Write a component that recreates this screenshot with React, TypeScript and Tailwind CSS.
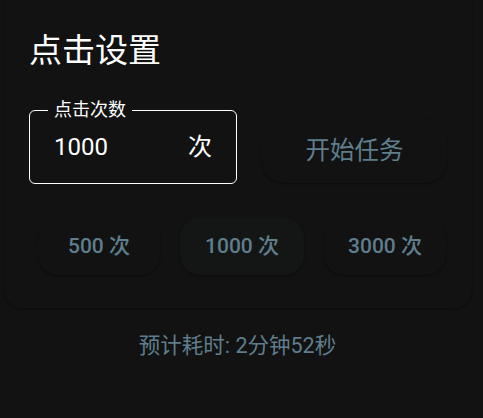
import React from "react";

const font = { fontFamily: "Roboto, 'Noto Sans CJK SC', sans-serif" };

export default function App() {
  return (
    <div className="w-[483px] h-[418px] bg-[#121212] overflow-hidden" style={font}>
      <div className="mx-[4px] w-[468px] rounded-b-[18px] bg-[#121212] shadow-[0_1px_2px_rgba(0,0,0,0.4)] pt-[29px] pb-[33px]">
        <h1 className="pl-[25px] text-[33px] leading-[44px] text-white font-normal">点击设置</h1>
        <div className="mt-[37px] px-[25px] flex items-start gap-[25px]">
          <div className="relative w-[208px] h-[74px] rounded-[6px] border-[1.5px] border-white flex items-center pl-[24px] pr-[24px]">
            <span className="absolute -top-[12px] left-[18px] px-[6px] bg-[#121212] text-[18px] leading-[22px] text-white">点击次数</span>
            <span className="flex-1 text-[24px] text-white">1000</span>
            <span className="text-[24px] text-white">次</span>
          </div>
          <div className="w-[185px] h-[64px] mt-[9px] rounded-[22px] bg-[#121212] shadow-[0_1px_2px_rgba(0,0,0,0.4)] flex items-center justify-center text-[24.5px] text-[#5f7e8d]">
            开始任务
          </div>
        </div>
        <div className="mt-[34px] pl-[34px] flex gap-[20px]">
          <div className="w-[122px] h-[57px] rounded-[20px] bg-[#121212] shadow-[0_1px_2px_rgba(0,0,0,0.4)] flex items-center justify-center text-[21px] font-medium text-[#5f7e8d]">500 次</div>
          <div className="w-[124px] h-[57px] rounded-[20px] bg-[#141616] shadow-[0_1px_2px_rgba(0,0,0,0.4)] flex items-center justify-center text-[21px] font-medium text-[#5f7e8d]">1000 次</div>
          <div className="w-[122px] h-[57px] rounded-[20px] bg-[#121212] shadow-[0_1px_2px_rgba(0,0,0,0.4)] flex items-center justify-center text-[21px] font-medium text-[#5f7e8d]">3000 次</div>
        </div>
      </div>
      <p className="mt-[24px] text-center pr-[8px] text-[21.5px] leading-[28px] text-[#5f7e8d]">预计耗时: 2分钟52秒</p>
    </div>
  );
}
